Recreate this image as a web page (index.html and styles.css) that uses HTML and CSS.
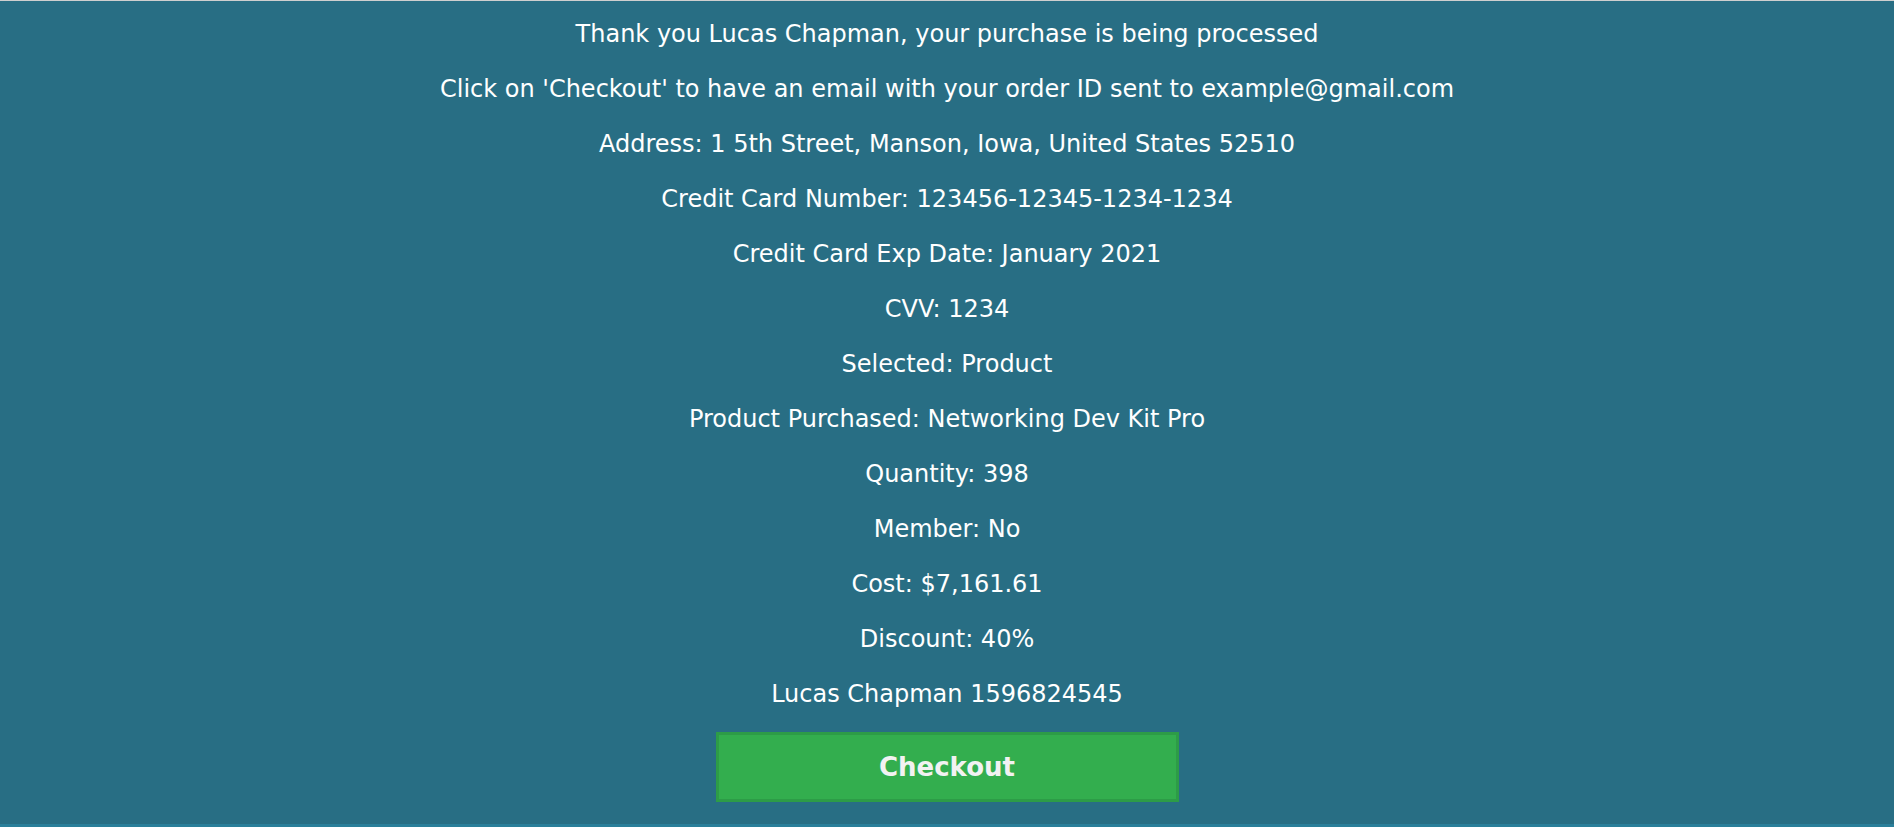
FILE: index.html
```html
<!DOCTYPE html>
<html>
<head>
<meta charset="utf-8">
<link rel="stylesheet" href="styles.css">
</head>
<body>
<main class="page">
  <section class="summary">
    <p class="line">Thank you Lucas Chapman, your purchase is being processed</p>
    <p class="line">Click on 'Checkout' to have an email with your order ID sent to example@gmail.com</p>
    <p class="line">Address: 1 5th Street, Manson, Iowa, United States 52510</p>
    <p class="line">Credit Card Number: 123456-12345-1234-1234</p>
    <p class="line">Credit Card Exp Date: January 2021</p>
    <p class="line">CVV: 1234</p>
    <p class="line">Selected: Product</p>
    <p class="line">Product Purchased: Networking Dev Kit Pro</p>
    <p class="line">Quantity: 398</p>
    <p class="line">Member: No</p>
    <p class="line">Cost: $7,161.61</p>
    <p class="line">Discount: 40%</p>
    <p class="line">Lucas Chapman 1596824545</p>
  </section>
  <button class="checkout" type="button">Checkout</button>
</main>
</body>
</html>
```

FILE: styles.css
```css
html, body {
  margin: 0;
  padding: 0;
  height: 100%;
  background: #2a7f9a;
}
body {
  font-family: "DejaVu Sans", Verdana, sans-serif;
  color: #ffffff;
}
.page {
  box-sizing: border-box;
  height: 824px;
  background: #286e84;
  border-top: 1px solid #cfcfcf;
  display: flex;
  flex-direction: column;
  align-items: center;
  padding-top: 19px;
}
.summary {
  display: flex;
  flex-direction: column;
  align-items: center;
  gap: 27px;
}
.line {
  margin: 0;
  font-size: 24px;
  line-height: 28px;
  text-align: center;
}
.checkout {
  margin-top: 24px;
  width: 463px;
  height: 70px;
  background: #33ae4e;
  border: 3px solid #2d9c47;
  color: #f2f2f2;
  font-family: "DejaVu Sans", Verdana, sans-serif;
  font-weight: bold;
  font-size: 26px;
  padding: 0;
}
```
